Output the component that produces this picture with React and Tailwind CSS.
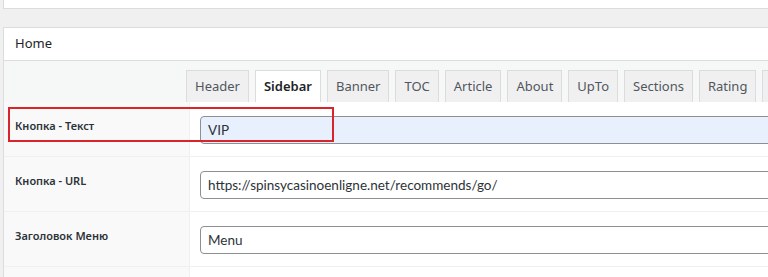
import React from 'react';

const tabs = ['Header', 'Sidebar', 'Banner', 'TOC', 'Article', 'About', 'UpTo', 'Sections', 'Rating', 'FAQ'];

const rows = [
    { label: 'Кнопка - Текст', value: 'VIP', filled: true },
    { label: 'Кнопка - URL', value: 'https://spinsycasinoenligne.net/recommends/go/' },
    { label: 'Заголовок Меню', value: 'Menu' },
    { label: '', value: null },
];

export default function App() {
    return (
        <div className="relative w-[768px] h-[277px] overflow-hidden bg-[#f0f0f1] font-['Noto_Sans',sans-serif] text-[#1d2327]">
            {/* top strip */}
            <div className="ml-[3px] h-[9px] bg-white border-l border-b border-[#dcdcde]" />

            {/* settings panel */}
            <div className="mt-[18px] ml-[3px] bg-white border-l border-t border-[#dcdcde]">
                <div className="h-[33px] flex items-center pl-[11px] text-[13px] border-b border-[#dcdcde]">
                    Home
                </div>

                {/* tab bar */}
                <div className="h-[41px] bg-[#f6f7f7] flex items-end gap-[6px] pl-[182px] whitespace-nowrap">
                    {tabs.map(t => (
                        <div
                            key={t}
                            className={`h-[32px] px-[8px] flex items-center text-[13px] border border-b-0 ${t === 'Sidebar'
                                ? 'bg-white border-[#dcdcde] text-[#1d2327] font-semibold'
                                : 'bg-[#f0f0f1] border-[#dcdcde] text-[#50575e]'}`}
                        >
                            {t}
                        </div>
                    ))}
                </div>

                {/* rows */}
                {rows.map((r, i) => (
                    <div key={i} className="flex h-[55px] border-b border-[#f0f0f1]">
                        <div className="w-[185px] shrink-0 bg-[#f9f9f9] pl-[11px] pt-[16px] text-[11px] font-semibold text-[#2c3338]">
                            {r.label}
                        </div>
                        <div className="flex-1 border-l border-[#f0f0f1] pl-[10px] pt-[14px]">
                            {r.value !== null && (
                                <div className={`h-[28px] w-[600px] rounded-[4px] border border-[#8c8f94] flex items-center px-[7px] font-['Lato',sans-serif] text-[13.5px] text-[#2c3338] whitespace-nowrap ${r.filled ? 'bg-[#e8f0fe]' : 'bg-white'}`}>
                                    {r.value}
                                </div>
                            )}
                        </div>
                    </div>
                ))}
            </div>

            {/* red annotation box */}
            <div className="absolute left-[8px] top-[107px] w-[326px] h-[35px] border-2 border-[#d9242b]" />
        </div>
    );
}
